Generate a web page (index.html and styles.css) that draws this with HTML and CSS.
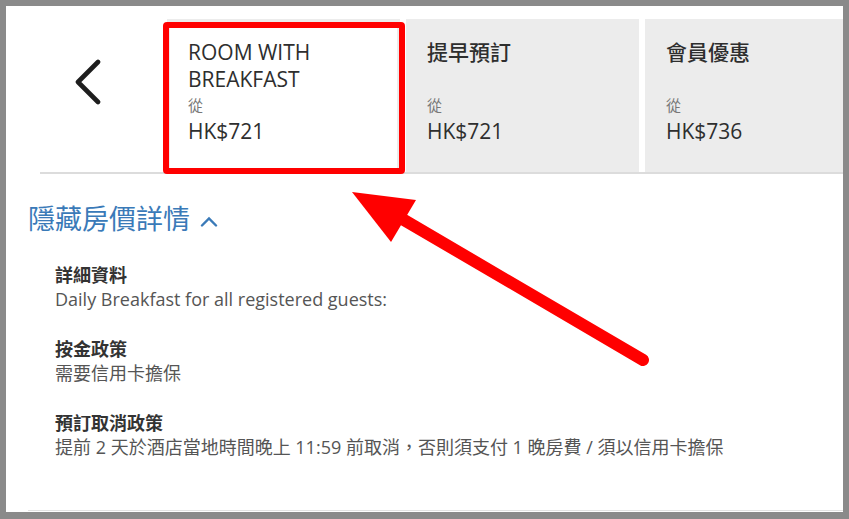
FILE: index.html
```html
<!DOCTYPE html>
<html lang="zh-Hant">
<head>
    <meta charset="utf-8">
    <title>Room Rates</title>
    <link rel="stylesheet" href="styles.css">
</head>
<body>
    <div class="frame">
        <div class="rate_bar">
            <div class="back">
                <svg width="28" height="46" viewBox="0 0 28 46">
                    <path d="M24 3 L4 23 L24 43" fill="none" stroke="#1e1e1e" stroke-width="4.6" stroke-linecap="round" stroke-linejoin="round"/>
                </svg>
            </div>
            <div class="tab selected">
                <div class="tab_title">ROOM WITH BREAKFAST</div>
                <div class="tab_from">從</div>
                <div class="tab_price">HK$721</div>
            </div>
            <div class="tab">
                <div class="tab_title">提早預訂</div>
                <div class="tab_from">從</div>
                <div class="tab_price">HK$721</div>
            </div>
            <div class="tab">
                <div class="tab_title">會員優惠</div>
                <div class="tab_from">從</div>
                <div class="tab_price">HK$736</div>
            </div>
        </div>

        <div class="toggle">
            隱藏房價詳情
            <svg width="18" height="11" viewBox="0 0 18 11">
                <path d="M2 9.5 L9 2.5 L16 9.5" fill="none" stroke="#3a7ab8" stroke-width="2.4" stroke-linecap="round"/>
            </svg>
        </div>

        <div class="details">
            <div class="detail_group">
                <div class="detail_label">詳細資料</div>
                <div class="detail_value">Daily Breakfast for all registered guests:</div>
            </div>
            <div class="detail_group">
                <div class="detail_label">按金政策</div>
                <div class="detail_value">需要信用卡擔保</div>
            </div>
            <div class="detail_group">
                <div class="detail_label">預訂取消政策</div>
                <div class="detail_value">提前 2 天於酒店當地時間晚上 11:59 前取消，否則須支付 1 晚房費 / 須以信用卡擔保</div>
            </div>
        </div>

        <div class="footer_line"></div>

        <!-- annotation: red box + arrow -->
        <div class="mark_box"></div>
        <svg class="mark_arrow" width="843" height="506" viewBox="0 0 843 506">
            <line x1="398" y1="214" x2="637" y2="354" stroke="#ff0000" stroke-width="12" stroke-linecap="round"/>
            <polygon points="346,186 410,194 385,236" fill="#ff0000"/>
        </svg>
    </div>
</body>
</html>
```

FILE: styles.css
```css
body {
    margin: 0;
    background: #8a8a8a;
    font-family: "Open Sans", "Noto Sans CJK TC", sans-serif;
    color: #333;
}
.frame {
    position: relative;
    display: flex;
    flex-direction: column;
    margin: 6px 6px 0 6px;
    height: 506px;
    background: #fff;
    overflow: hidden;
}
.rate_bar {
    display: flex;
    gap: 6px;
    margin: 13px 0 0 34px;
    height: 153px;
    border-bottom: 2px solid #dcdcdc;
}
.back {
    flex: none;
    width: 121px;
    padding: 40px 0 0 34px;
    box-sizing: border-box;
}
.tab {
    flex: none;
    width: 233px;
    box-sizing: border-box;
    padding: 17px 18px 0 18px;
    border: 3px solid #ececec;
    border-bottom: none;
    background: #ececec;
}
.tab.selected {
    background: #fff;
}
.tab_title {
    height: 54px;
    font-size: 21px;
    font-weight: 500;
    line-height: 27px;
    color: #2e2e2e;
}
.tab_from {
    font-size: 15px;
    line-height: 25px;
    color: #777;
}
.tab_price {
    font-size: 21px;
    font-weight: 500;
    line-height: 27px;
    color: #2e2e2e;
}
.toggle {
    display: flex;
    align-items: center;
    gap: 10px;
    margin: 26px 0 0 22px;
    font-size: 27px;
    line-height: 38px;
    color: #3a7ab8;
}
.toggle svg {
    margin-top: 4px;
}
.details {
    padding: 25px 0 0 49px;
}
.detail_group {
    margin-bottom: 26px;
}
.detail_label {
    font-size: 18px;
    font-weight: 700;
    line-height: 24px;
}
.detail_value {
    font-size: 18px;
    line-height: 24px;
    color: #555;
}
.footer_line {
    margin: auto 0 1px 22px;
    border-top: 1px solid #e2e2e2;
}
.mark_box {
    position: absolute;
    left: 157px;
    top: 16px;
    width: 242px;
    height: 152px;
    box-sizing: border-box;
    border: 6px solid #ff0000;
    border-radius: 4px;
}
.mark_arrow {
    position: absolute;
    left: 0;
    top: 0;
}
```
